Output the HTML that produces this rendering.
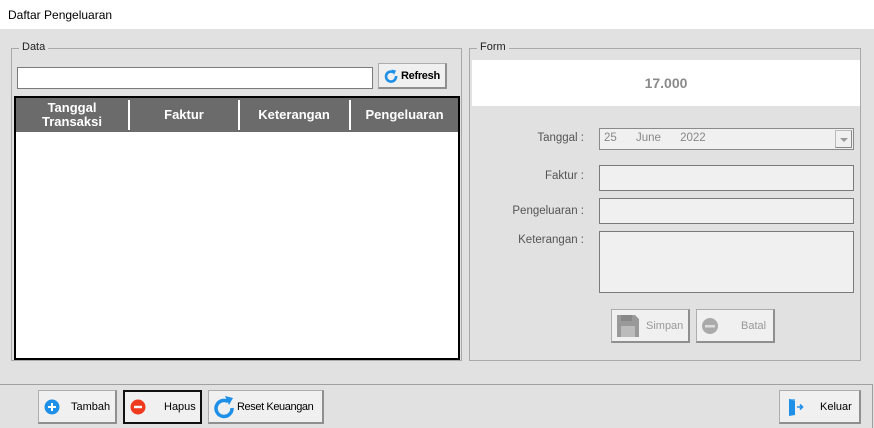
<!DOCTYPE html>
<html><head><style>
*{box-sizing:border-box;margin:0;padding:0}
body{width:874px;height:428px;position:relative;background:#e1e1e1;font-family:"Liberation Sans",sans-serif;font-size:12px;color:#000;overflow:hidden}
.a{position:absolute}
.grp{position:absolute;border:1px solid #a9a9a9}
.leg{position:absolute;background:#e1e1e1;padding:0 3px;font-size:11px;top:-8px;left:7px;color:#222}
.btn{position:absolute;background:#f0f0f0;border:1px solid #adadad;border-right:2px solid #8f8f8f;border-bottom:2px solid #8f8f8f;display:flex;align-items:center;font-size:11px;white-space:nowrap}
.box{position:absolute;background:#f0f0f0;border:1px solid #7a7a7a}
.lbl{position:absolute;font-size:11.5px;color:#555;text-align:right;width:150px}
.th{position:absolute;top:0;height:33px;color:#fff;font-weight:bold;font-size:13px;display:flex;align-items:center;justify-content:center;text-align:center;line-height:14px}
.dv{position:absolute;top:2px;width:2px;height:30px;background:#fff}
</style></head><body>
<div class="a" style="left:0;top:0;width:874px;height:29px;background:#fff"></div>
<div class="a" style="left:8px;top:8px;font-size:12px">Daftar Pengeluaran</div>

<div class="grp" style="left:11px;top:48px;width:451px;height:313px"><div class="leg">Data</div></div>
<div class="a" style="left:17px;top:67px;width:356px;height:22px;background:#fff;border:1px solid #7a7a7a"></div>
<div class="btn" style="left:378px;top:63px;width:69px;height:26px;padding-left:5px">
<svg width="14" height="14" viewBox="0 0 14 14"><path d="M9.5 3.2A5 5 0 1 0 12 7" fill="none" stroke="#1e90e8" stroke-width="2.6"/><path d="M7.5 0.5L12 1.5 10 6z" fill="#1e90e8"/></svg><span style="margin-left:3px;font-weight:bold;font-size:11px;letter-spacing:-0.3px">Refresh</span></div>
<div class="a" style="left:14px;top:96px;width:446px;height:264px;background:#fff;border:2px solid #000">
 <div class="a" style="left:0;top:0;width:442px;height:34px;background:#6b6b6b"></div>
 <div class="th" style="left:0;width:112px">Tanggal<br>Transaksi</div>
 <div class="dv" style="left:112px"></div>
 <div class="th" style="left:114px;width:108px">Faktur</div>
 <div class="dv" style="left:222px"></div>
 <div class="th" style="left:224px;width:108px">Keterangan</div>
 <div class="dv" style="left:333px"></div>
 <div class="th" style="left:335px;width:107px">Pengeluaran</div>
</div>

<div class="grp" style="left:469px;top:48px;width:392px;height:313px"><div class="leg">Form</div></div>
<div class="a" style="left:472px;top:60px;width:388px;height:46px;background:#fff;display:flex;align-items:center;justify-content:center;font-weight:bold;font-size:14px;color:#8a8a8a">17.000</div>
<div class="lbl" style="left:434px;top:132px">Tanggal :</div>
<div class="lbl" style="left:434px;top:170px">Faktur :</div>
<div class="lbl" style="left:434px;top:205px">Pengeluaran :</div>
<div class="lbl" style="left:434px;top:234px">Keterangan :</div>
<div class="box" style="left:599px;top:128px;width:255px;height:22px;border-color:#8a8a8a;color:#888;font-size:11.5px;padding:3px 4px">25&nbsp;&nbsp;&nbsp;&nbsp;&nbsp;&nbsp;June&nbsp;&nbsp;&nbsp;&nbsp;&nbsp;&nbsp;2022
 <div class="a" style="right:1px;top:1px;width:17px;height:18px;background:#f0f0f0;border:1px solid #bbb;border-right-color:#888;border-bottom-color:#888"><div class="a" style="left:4px;top:7px;border-left:4px solid transparent;border-right:4px solid transparent;border-top:4px solid #999"></div></div></div>
<div class="box" style="left:599px;top:165px;width:255px;height:26px"></div>
<div class="box" style="left:599px;top:198px;width:255px;height:26px"></div>
<div class="box" style="left:599px;top:231px;width:255px;height:62px"></div>
<div class="btn" style="left:611px;top:309px;width:79px;height:34px;color:#999;padding-left:4px">
<svg width="24" height="24" viewBox="0 0 24 24"><path d="M1 1h18l4 4v18H1z" fill="#999"/><rect x="5" y="1" width="11" height="6" fill="#888"/><rect x="5" y="12" width="14" height="11" fill="#bbb"/></svg><span style="margin-left:6px">Simpan</span></div>
<div class="btn" style="left:696px;top:309px;width:79px;height:34px;color:#999;padding-left:4px">
<svg width="18" height="18" viewBox="0 0 18 18"><circle cx="9" cy="9" r="8" fill="#aaa"/><rect x="4" y="8" width="10" height="2.5" fill="#ddd"/></svg><span style="margin-left:22px">Batal</span></div>

<div class="a" style="left:0;top:384px;width:873px;height:44px;border-top:1px solid #a0a0a0;border-right:1px solid #a0a0a0"></div>
<div class="btn" style="left:38px;top:390px;width:79px;height:34px;padding-left:5px">
<svg width="16" height="16" viewBox="0 0 16 16"><circle cx="8" cy="8" r="7.5" fill="#1e90e8"/><path d="M8 4v8M4 8h8" stroke="#fff" stroke-width="2"/></svg><span style="margin-left:11px">Tambah</span></div>
<div class="btn" style="left:123px;top:390px;width:79px;height:34px;padding-left:5px;border:2px solid #111">
<svg width="16" height="16" viewBox="0 0 16 16"><circle cx="8" cy="8" r="7.5" fill="#f03a1e"/><path d="M4 8h8" stroke="#fff" stroke-width="2.4"/></svg><span style="margin-left:18px">Hapus</span></div>
<div class="btn" style="left:208px;top:390px;width:116px;height:34px;padding-left:5px">
<svg width="22" height="24" viewBox="0 0 22 24"><path d="M14 6.5A8 8 0 1 0 18 13" fill="none" stroke="#1e90e8" stroke-width="3.5"/><path d="M11 1l8 2-4 7z" fill="#1e90e8"/></svg><span style="margin-left:1px;letter-spacing:-0.4px">Reset Keuangan</span></div>
<div class="btn" style="left:779px;top:390px;width:82px;height:34px;padding-left:8px">
<svg width="16" height="18" viewBox="0 0 16 18"><path d="M1 1h6v16H1z" fill="#6ab4f0"/><path d="M1 1l6 2v14l-6 1z" fill="#1e90e8"/><path d="M9 9h5M12 6.5L14.5 9 12 11.5" stroke="#1e90e8" stroke-width="1.6" fill="none"/></svg><span style="margin-left:16px">Keluar</span></div>
</body></html>
